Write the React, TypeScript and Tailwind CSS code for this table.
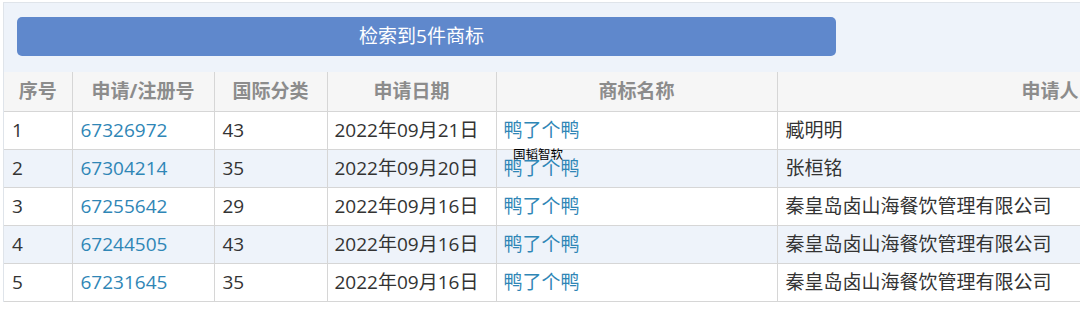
import React from 'react';

const rows = [
  { no: '1', reg: '67326972', cls: '43', date: '2022年09月21日', name: '鸭了个鸭', owner: '臧明明' },
  { no: '2', reg: '67304214', cls: '35', date: '2022年09月20日', name: '鸭了个鸭', owner: '张桓铭' },
  { no: '3', reg: '67255642', cls: '29', date: '2022年09月16日', name: '鸭了个鸭', owner: '秦皇岛卤山海餐饮管理有限公司' },
  { no: '4', reg: '67244505', cls: '43', date: '2022年09月16日', name: '鸭了个鸭', owner: '秦皇岛卤山海餐饮管理有限公司' },
  { no: '5', reg: '67231645', cls: '35', date: '2022年09月16日', name: '鸭了个鸭', owner: '秦皇岛卤山海餐饮管理有限公司' },
];

const headers = ['序号', '申请/注册号', '国际分类', '申请日期', '商标名称', '申请人'];
const widths = ['w-[68px]', 'w-[142px]', 'w-[113px]', 'w-[169px]', 'w-[281px]', 'w-[546px]'];

export default function App() {
  return (
    <div
      className="relative w-[1080px] h-[313px] overflow-hidden bg-white"
      style={{ fontFamily: '"Open Sans", "Noto Sans CJK SC", sans-serif' }}
    >
      <div className="ml-[3px] mt-[2px] w-[1400px] border-l border-t border-[#dfe4ea]">
        {/* result bar */}
        <div className="bg-[#eef3fa] pt-[14px] pb-[16px] pl-[13px]">
          <div className="flex h-[39px] w-[819px] items-center justify-center rounded-[5px] bg-[#5f88cc] pr-[10px] text-[19px] text-white">
            检索到5件商标
          </div>
        </div>

        <table className="table-fixed border-collapse text-[19px]">
          <colgroup>
            {widths.map((w, i) => (
              <col key={i} className={w} />
            ))}
          </colgroup>
          <thead>
            <tr className="h-[39px] bg-[#f6f6f6]">
              {headers.map((h) => (
                <th
                  key={h}
                  className="border-b border-r border-[#d6d6d6] text-center font-bold text-[#8c8c8c] leading-none"
                >
                  {h}
                </th>
              ))}
            </tr>
          </thead>
          <tbody>
            {rows.map((r, i) => (
              <tr key={r.no} className={`h-[38px] ${i % 2 === 1 ? 'bg-[#eef3fa]' : 'bg-white'}`}>
                <td className="border-b border-r border-[#d6d6d6] pl-[8px] text-[#333]">{r.no}</td>
                <td className="border-b border-r border-[#d6d6d6] pl-[8px] text-[#2f86b6]">{r.reg}</td>
                <td className="border-b border-r border-[#d6d6d6] pl-[8px] text-[#333]">{r.cls}</td>
                <td className="border-b border-r border-[#d6d6d6] pl-[7px] text-[#333]">{r.date}</td>
                <td className="border-b border-r border-[#d6d6d6] pl-[7px] text-[#2f86b6]">{r.name}</td>
                <td className="border-b border-r border-[#d6d6d6] pl-[8px] text-[#333]">{r.owner}</td>
              </tr>
            ))}
          </tbody>
        </table>
      </div>

      {/* watermark */}
      <div
        className="absolute left-[513px] top-[148px] text-[12.5px] leading-none text-black"
        style={{ fontFamily: '"Noto Sans CJK SC", sans-serif' }}
      >
        国韬智软
      </div>
    </div>
  );
}
